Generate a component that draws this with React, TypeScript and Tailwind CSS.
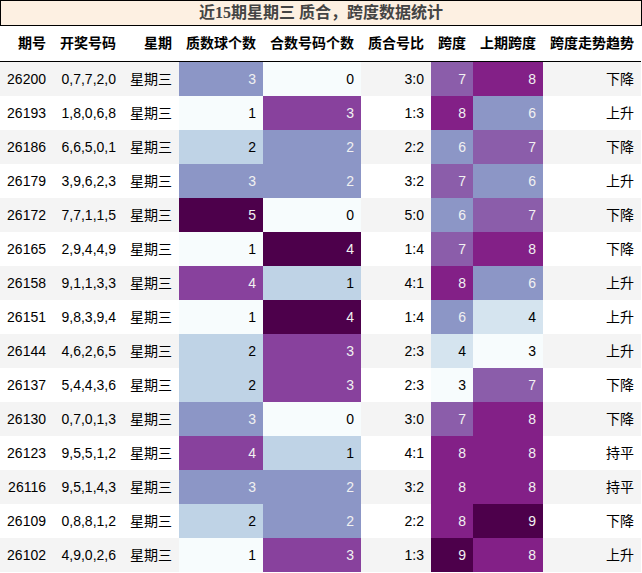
import React from "react";

type Row = [string, string, number, number, string, number, number, string];

const rows: Row[] = [
  ["26200", "0,7,7,2,0", 3, 0, "3:0", 7, 8, "下降"],
  ["26193", "1,8,0,6,8", 1, 3, "1:3", 8, 6, "上升"],
  ["26186", "6,6,5,0,1", 2, 2, "2:2", 6, 7, "下降"],
  ["26179", "3,9,6,2,3", 3, 2, "3:2", 7, 6, "上升"],
  ["26172", "7,7,1,1,5", 5, 0, "5:0", 6, 7, "下降"],
  ["26165", "2,9,4,4,9", 1, 4, "1:4", 7, 8, "下降"],
  ["26158", "9,1,1,3,3", 4, 1, "4:1", 8, 6, "上升"],
  ["26151", "9,8,3,9,4", 1, 4, "1:4", 6, 4, "上升"],
  ["26144", "4,6,2,6,5", 2, 3, "2:3", 4, 3, "上升"],
  ["26137", "5,4,4,3,6", 2, 3, "2:3", 3, 7, "下降"],
  ["26130", "0,7,0,1,3", 3, 0, "3:0", 7, 8, "下降"],
  ["26123", "9,5,5,1,2", 4, 1, "4:1", 8, 8, "持平"],
  ["26116", "9,5,1,4,3", 3, 2, "3:2", 8, 8, "持平"],
  ["26109", "0,8,8,1,2", 2, 2, "2:2", 8, 9, "下降"],
  ["26102", "4,9,0,2,6", 1, 3, "1:3", 9, 8, "上升"],
];

const W = "bg-[#f7fcfd] text-black";
const B = "bg-[#bfd3e6] text-black";
const S4 = "bg-[#d5e4ef] text-black";
const M = "bg-[#8c96c6] text-[#f1f1f1]";
const S7 = "bg-[#8b5daa] text-[#f1f1f1]";
const P = "bg-[#88419d] text-[#f1f1f1]";
const S8 = "bg-[#832087] text-[#f1f1f1]";
const D = "bg-[#4d004b] text-[#f1f1f1]";

const primeCls: Record<number, string> = { 1: W, 2: B, 3: M, 4: P, 5: D };
const compCls: Record<number, string> = { 0: W, 1: B, 2: M, 3: P, 4: D };
const spanCls: Record<number, string> = { 3: W, 4: S4, 6: M, 7: S7, 8: S8, 9: D };

const grid = "grid grid-cols-[53px_70px_56px_84px_98px_70px_42px_70px_98px]";
const cell = "flex items-center justify-end pr-[7px] whitespace-nowrap";

const headers = ["期号", "开奖号码", "星期", "质数球个数", "合数号码个数", "质合号比", "跨度", "上期跨度", "跨度走势趋势"];

export default function App() {
  return (
    <div
      className="w-[642px] bg-white text-[14px] text-black"
      style={{ fontFamily: '"Liberation Sans", "Noto Sans CJK SC", sans-serif' }}
    >
      <div
        className="h-[26px] border border-black bg-[#fdf0e2] flex items-center justify-center text-[16px] font-bold text-[#444444]"
        style={{ fontFamily: '"Liberation Serif", "Noto Sans CJK SC", serif' }}
      >
        近15期星期三 质合，跨度数据统计
      </div>
      <div className="w-[641px]">
        <div className={`${grid} h-[36px] border-b border-black font-bold`}>
          {headers.map((h) => (
            <div key={h} className={cell}>
              {h}
            </div>
          ))}
        </div>
        {rows.map((r, i) => {
          const stripe = i % 2 === 0 ? "bg-[#f4f4f4]" : "bg-white";
          return (
            <div key={r[0]} className={`${grid} h-[34px] ${stripe}`}>
              <div className={cell}>{r[0]}</div>
              <div className={cell}>{r[1]}</div>
              <div className={cell}>星期三</div>
              <div className={`${cell} ${primeCls[r[2]]}`}>{r[2]}</div>
              <div className={`${cell} ${compCls[r[3]]}`}>{r[3]}</div>
              <div className={cell}>{r[4]}</div>
              <div className={`${cell} ${spanCls[r[5]]}`}>{r[5]}</div>
              <div className={`${cell} ${spanCls[r[6]]}`}>{r[6]}</div>
              <div className={cell}>{r[7]}</div>
            </div>
          );
        })}
      </div>
    </div>
  );
}
